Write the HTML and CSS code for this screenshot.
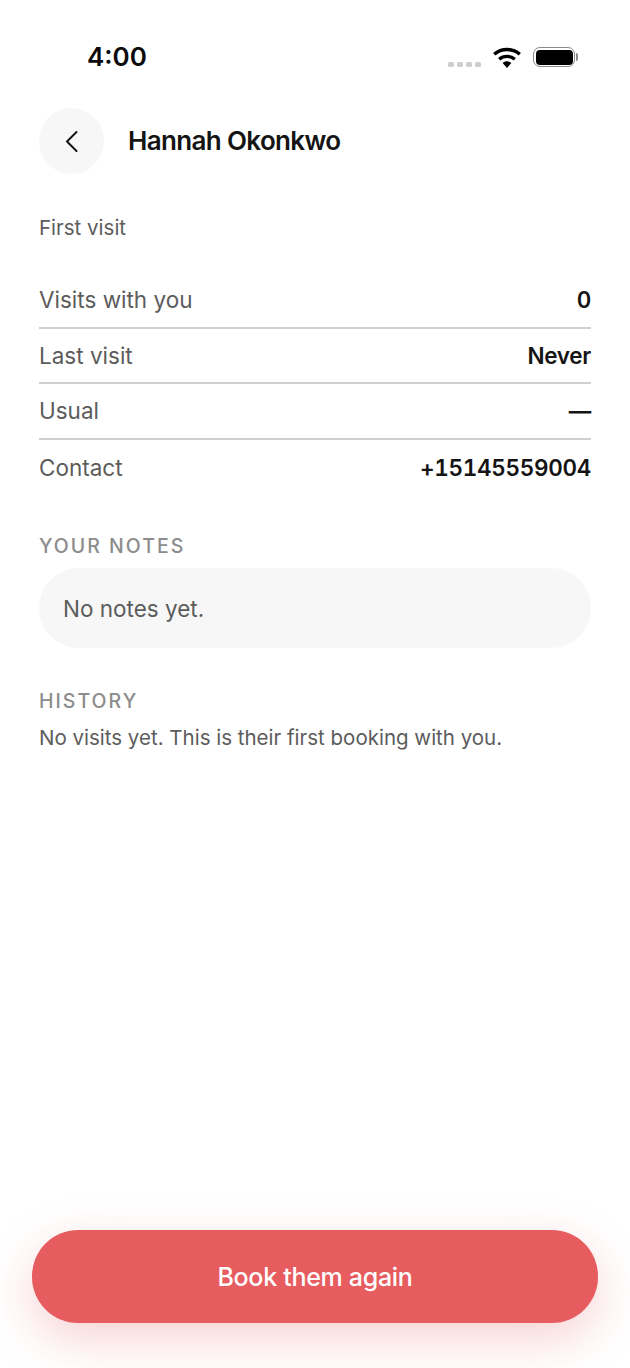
FILE: index.html
```html
<!DOCTYPE html>
<html>
<head>
    <title>Hannah Okonkwo</title>
    <link rel="stylesheet" href="styles.css">
</head>
<body>
    <div class="status-bar">
        <span class="time">4:00</span>
        <div class="status-icons">
            <div class="signal"><i></i><i></i><i></i><i></i></div>
            <svg class="wifi" width="28" height="21" viewBox="0 0 28 21">
                <path d="M1.2 7.2C8.4 .9 19.6 .9 26.8 7.2" fill="none" stroke="#000" stroke-width="3.4"/>
                <path d="M6.2 12.2C10.5 8.4 17.5 8.4 21.8 12.2" fill="none" stroke="#000" stroke-width="3.4"/>
                <path d="M9.6 16C12.1 13.8 15.9 13.8 18.4 16L14 21Z" fill="#000"/>
            </svg>
            <div class="battery"><div class="battery-level"></div></div>
            <div class="battery-cap"></div>
        </div>
    </div>

    <div class="header">
        <button class="back">
            <svg width="14" height="23" viewBox="0 0 14 23">
                <path d="M11.5 2L2 11.5L11.5 21" fill="none" stroke="#141414" stroke-width="2" stroke-linecap="round" stroke-linejoin="round"/>
            </svg>
        </button>
        <h1>Hannah Okonkwo</h1>
    </div>

    <div class="content">
        <p class="subtitle">First visit</p>

        <div class="facts">
            <div class="row"><span>Visits with you</span><strong>0</strong></div>
            <div class="row"><span>Last visit</span><strong>Never</strong></div>
            <div class="row"><span>Usual</span><strong>—</strong></div>
            <div class="row"><span>Contact</span><strong>+15145559004</strong></div>
        </div>

        <h2 class="section-label notes-label">YOUR NOTES</h2>
        <div class="notes">No notes yet.</div>

        <h2 class="section-label history-label">HISTORY</h2>
        <p class="history">No visits yet. This is their first booking with you.</p>
    </div>

    <div class="footer">
        <button class="book">Book them again</button>
    </div>
</body>
</html>
```

FILE: styles.css
```css
body {
    margin: 0;
    height: 1368px;
    overflow: hidden;
    display: flex;
    flex-direction: column;
    background: #fff;
    color: #141414;
    font-family: Inter, "Liberation Sans", sans-serif;
}
.status-bar {
    height: 108px;
    box-sizing: border-box;
    padding: 40px 52px 0 87px;
    display: flex;
    justify-content: space-between;
    align-items: flex-start;
}
.time {
    font-size: 26px;
    line-height: 34px;
    font-weight: 600;
    color: #0a0a0a;
}
.status-icons {
    display: flex;
    align-items: flex-start;
    padding-top: 7px;
}
.signal {
    display: flex;
    gap: 3px;
    margin: 15px 12px 0 0;
}
.signal i {
    width: 6px;
    height: 5px;
    border-radius: 1.5px;
    background: #cfcfcf;
}
.wifi {
    margin-right: 12px;
}
.battery {
    width: 42px;
    height: 20px;
    padding: 1.5px;
    border: 1.5px solid #8a8a8a;
    border-radius: 7px;
    box-sizing: border-box;
}
.battery-level {
    height: 100%;
    background: #000;
    border-radius: 4px;
}
.battery-cap {
    width: 2px;
    height: 8px;
    margin: 6px 0 0 1px;
    background: #8a8a8a;
    border-radius: 0 2px 2px 0;
}
.header {
    display: flex;
    align-items: center;
    gap: 24px;
    padding: 0 39px;
}
.back {
    width: 65px;
    height: 66px;
    padding: 0;
    border: none;
    border-radius: 50%;
    background: #f7f7f7;
    display: flex;
    align-items: center;
    justify-content: center;
}
h1 {
    margin: 0 0 2px;
    font-size: 26px;
    font-weight: 600;
    letter-spacing: -0.65px;
}
.content {
    flex: 1;
    padding: 0 39px;
}
.subtitle {
    margin: 41px 0 0;
    font-size: 20.5px;
    line-height: 26px;
    color: #5c5c5c;
}
.facts {
    margin-top: 32px;
}
.row {
    height: 55.5px;
    box-sizing: border-box;
    display: flex;
    justify-content: space-between;
    align-items: center;
    border-bottom: 2px solid #cfcfcf;
    font-size: 22.5px;
    color: #5c5c5c;
}
.row:last-child {
    border-bottom: none;
}
.row strong {
    font-weight: 600;
    font-variant-numeric: tabular-nums;
    letter-spacing: -0.3px;
    color: #141414;
}
.section-label {
    margin: 0;
    font-size: 19.5px;
    line-height: 24px;
    font-weight: 500;
    letter-spacing: 2px;
    color: #8c8c8c;
}
.notes-label {
    margin-top: 39px;
}
.notes {
    margin-top: 10px;
    height: 80px;
    box-sizing: border-box;
    padding: 0 24px;
    display: flex;
    align-items: center;
    border-radius: 40px;
    background: #f7f7f7;
    font-size: 22.5px;
    color: #5c5c5c;
}
.history-label {
    margin-top: 41px;
}
.history {
    margin: 11px 0 0;
    font-size: 20.5px;
    line-height: 28px;
    color: #5c5c5c;
}
.footer {
    padding: 0 32px 45px;
}
.book {
    width: 100%;
    height: 93px;
    border: none;
    border-radius: 46px;
    background: #e75c5f;
    color: #fff;
    font-family: inherit;
    font-size: 25px;
    font-weight: 500;
    letter-spacing: -0.3px;
    box-shadow: 0 16px 48px rgba(231, 92, 95, 0.28);
}
```
